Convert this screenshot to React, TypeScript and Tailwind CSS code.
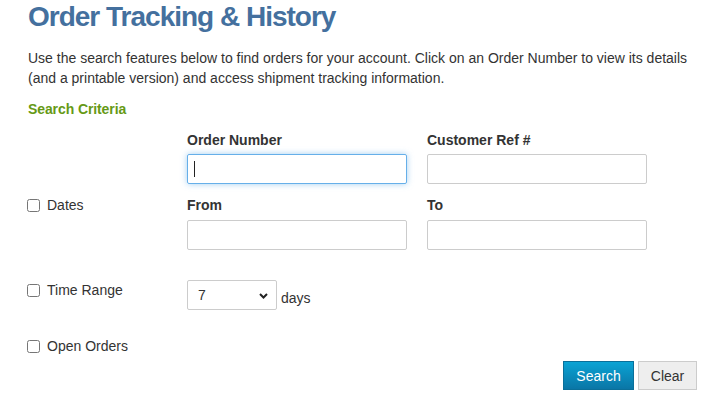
import React from "react";

function Check({ label }: { label: string }) {
  return (
    <label className="flex items-center h-[20px] -ml-[1px]">
      <input type="checkbox" className="w-[13px] h-[13px] m-0" />
      <span className="ml-[7px]">{label}</span>
    </label>
  );
}

export default function App() {
  return (
    <div
      className="w-[711px] h-[407px] bg-white text-[#333] text-[14px] leading-[20px] overflow-hidden"
      style={{ fontFamily: '"Liberation Sans", Arial, sans-serif' }}
    >
      <div className="ml-[28px] w-[669px]">
        <h1 className="text-[28px] leading-[32px] font-bold text-[#44709e] tracking-[-1px] mt-[1px]">
          Order Tracking &amp; History
        </h1>
        <p className="mt-[15px]">
          Use the search features below to find orders for your account. Click on an Order Number to view its details
          (and a printable version) and access shipment tracking information.
        </p>
        <h2 className="mt-[11px] font-bold text-[#669915] tracking-[-0.1px]">Search Criteria</h2>

        <div className="grid grid-cols-[139px_220px_220px] gap-x-[20px] mt-[11px]">
          <div />
          <div>
            <div className="font-bold">Order Number</div>
            <div className="relative mt-[4px]">
              <input
                type="text"
                className="block w-[220px] h-[30px] border border-[#66afe9] rounded-[2px] px-[6px] outline-none shadow-[0_0_6px_rgba(102,175,233,0.6)]"
              />
              <span className="absolute left-[7px] top-[7px] w-[1px] h-[16px] bg-[#222]" />
            </div>
          </div>
          <div>
            <div className="font-bold">Customer Ref #</div>
            <input
              type="text"
              className="block mt-[4px] w-[220px] h-[30px] border border-[#ccc] rounded-[2px] px-[6px] outline-none"
            />
          </div>

          <div className="mt-[11px]">
            <Check label="Dates" />
          </div>
          <div className="mt-[11px]">
            <div className="font-bold">From</div>
            <input
              type="text"
              className="block mt-[5px] w-[220px] h-[30px] border border-[#ccc] rounded-[2px] px-[6px] outline-none"
            />
          </div>
          <div className="mt-[11px]">
            <div className="font-bold">To</div>
            <input
              type="text"
              className="block mt-[5px] w-[220px] h-[30px] border border-[#ccc] rounded-[2px] px-[6px] outline-none"
            />
          </div>

          <div className="mt-[30px]">
            <Check label="Time Range" />
          </div>
          <div className="mt-[30px] col-span-2 flex items-end">
            <div className="relative w-[90px] h-[30px]">
              <select className="appearance-none block w-[90px] h-[30px] border border-[#ccc] rounded-[2px] pl-[10px] pr-[20px] bg-white outline-none text-[#333]">
                <option>7</option>
                <option>14</option>
                <option>30</option>
                <option>60</option>
                <option>90</option>
              </select>
              <svg
                className="absolute right-[9px] top-[13px] pointer-events-none"
                width="9"
                height="6"
                viewBox="0 0 9 6"
              >
                <path d="M1 1l3.5 3.5L8 1" fill="none" stroke="#222" strokeWidth="2" />
              </svg>
            </div>
            <span className="ml-[4px] mb-[2px]">days</span>
          </div>

          <div className="mt-[26px]">
            <Check label="Open Orders" />
          </div>
        </div>

        <div className="flex justify-end gap-[4px] mt-[5px]">
          <button className="h-[29px] w-[71px] border border-[#0a6f99] bg-gradient-to-b from-[#0aa3d4] to-[#0a76a6] text-white">
            Search
          </button>
          <button className="h-[29px] w-[59px] border border-[#ccc] bg-[#eeeeee] text-[#333]">Clear</button>
        </div>
      </div>
    </div>
  );
}
